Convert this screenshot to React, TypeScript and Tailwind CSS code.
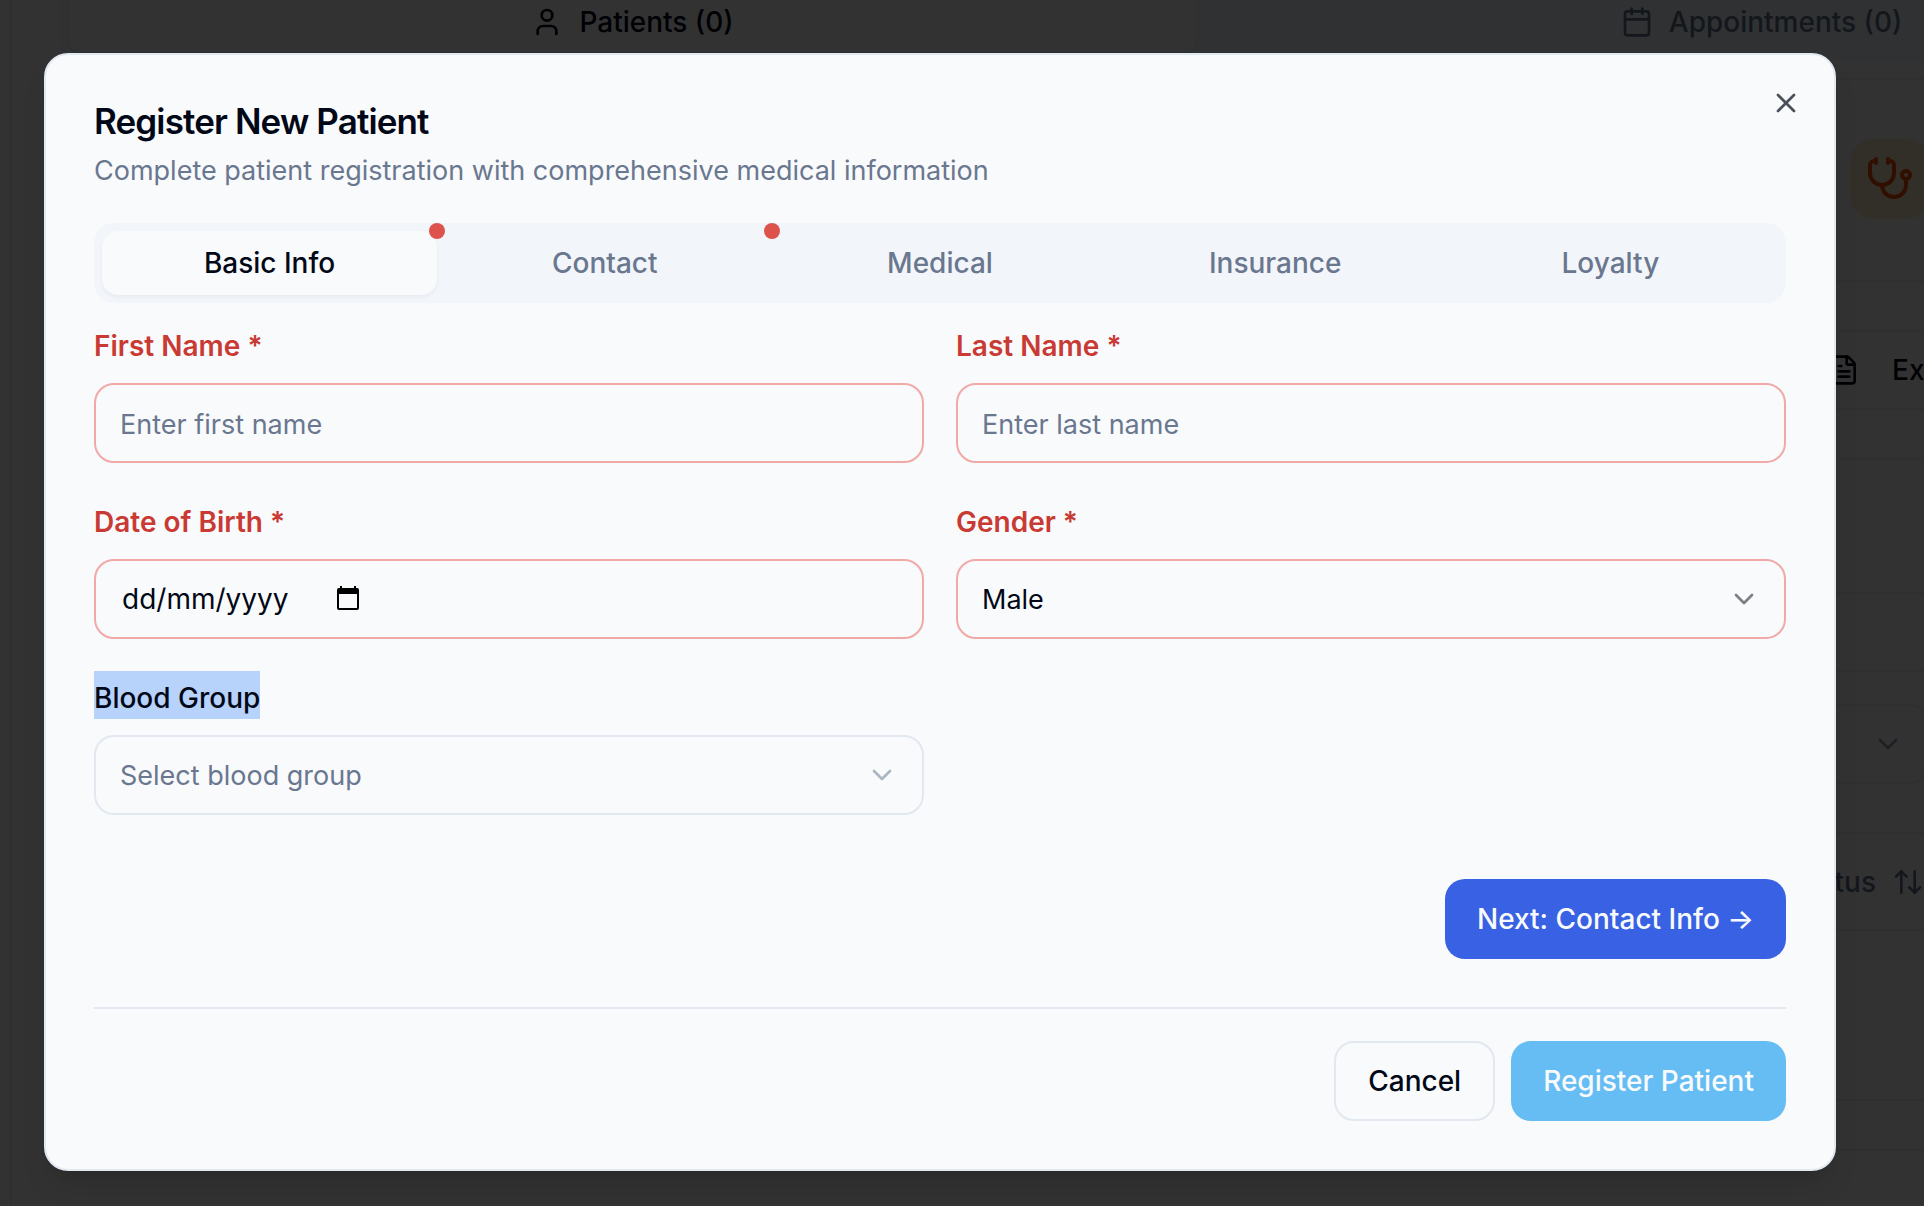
import { useState } from "react";
import type { ReactNode } from "react";
import { ArrowUpDown, Calendar, ChevronDown, FileText, Stethoscope, User, X } from "lucide-react";

const TABS = [
  { name: "Basic Info", missing: true },
  { name: "Contact", missing: true },
  { name: "Medical", missing: false },
  { name: "Insurance", missing: false },
  { name: "Loyalty", missing: false },
];

function Field({ id, label, required, children }: { id: string; label: string; required?: boolean; children: ReactNode }) {
  return (
    <div className="flex flex-col gap-4">
      <div className="flex h-12">
        {required ? (
          <label htmlFor={id} className="text-[28px] leading-[54px] font-semibold text-[#c93a34]">
            {label} *
          </label>
        ) : (
          <label htmlFor={id} className="bg-[#b7d3fb] text-[28px] leading-[54px] font-medium">
            {label}
          </label>
        )}
      </div>
      {children}
    </div>
  );
}

function Backdrop() {
  return (
    <div aria-hidden="true" className="absolute inset-0 overflow-hidden bg-[#f8fafc]">
      <div className="ml-[10px] flex h-full flex-col border-l-2 border-slate-200 pl-12">
        <div className="-mt-5 grid h-20 w-[122%] shrink-0 grid-cols-2 rounded-2xl bg-[#f1f5f9] p-2 text-[28px] font-medium">
          <div className="flex items-center justify-center gap-4 rounded-xl bg-[#f8fafc] pt-1 shadow-sm">
            <User size={32} />
            Patients (0)
          </div>
          <div className="flex items-center justify-center gap-4 pt-1 text-slate-500">
            <Calendar size={32} />
            Appointments (0)
          </div>
        </div>
        <div className="mt-[18px] flex h-[204px] shrink-0 justify-end border-y-2 border-slate-200">
          <div className="mt-[59px] -mr-1.5 flex size-20 items-center justify-center rounded-3xl bg-[#faebc8] text-orange-600">
            <Stethoscope size={48} />
          </div>
        </div>
        <div className="mt-12 flex h-20 shrink-0 items-center justify-end gap-8 border-y-2 border-slate-200 text-[28px] font-medium">
          <FileText size={32} />
          <span className="w-8">Ex</span>
        </div>
        <div className="mt-12 h-[136px] shrink-0 border-y-2 border-slate-200" />
        <div className="mt-[76px] flex h-[164px] shrink-0 items-center border-y-2 border-slate-200 pb-4">
          <div className="-mr-2 flex h-20 flex-1 items-center justify-end rounded-3xl border-2 border-slate-200 pr-[26px] text-slate-400">
            <ChevronDown size={32} />
          </div>
        </div>
        <div className="flex h-[97px] shrink-0 items-center justify-end gap-4 border-b-2 border-slate-200 text-[28px] font-medium text-slate-500">
          Status
          <ArrowUpDown size={32} />
        </div>
        <div className="h-[170px] shrink-0 border-b-2 border-slate-200" />
        <div className="h-[50px] shrink-0 border-b-2 border-slate-200" />
      </div>
    </div>
  );
}

export default function App() {
  const [tab, setTab] = useState("Basic Info");
  return (
    <div className="relative min-h-screen overflow-hidden font-['Inter','Liberation_Sans',sans-serif] text-[#020817]">
      <Backdrop />
      <div className="absolute inset-0 bg-black/80" />
      <div className="relative mr-11 flex justify-center px-2 pt-[53px] pb-8">
        <div
          role="dialog"
          aria-labelledby="dialog-title"
          className="relative flex w-full max-w-[1792px] flex-col rounded-3xl border-2 border-slate-200 bg-[#f9fafc] p-12 shadow-[0_20px_30px_-6px_rgb(0_0_0/0.1),0_8px_12px_-8px_rgb(0_0_0/0.1)]"
        >
          <button type="button" aria-label="Close" className="absolute top-8 right-8 opacity-70">
            <X size={32} />
          </button>
          <h2 id="dialog-title" className="text-[35px] leading-9 font-semibold tracking-tight">
            Register New Patient
          </h2>
          <p className="mt-3 text-[27px] leading-10 text-[#69778f]">
            Complete patient registration with comprehensive medical information
          </p>

          <div role="tablist" className="mt-8 grid h-20 grid-cols-5 rounded-[20px] bg-[#f2f5fa] p-2">
            {TABS.map((t) => (
              <button
                key={t.name}
                type="button"
                role="tab"
                aria-selected={tab === t.name}
                onClick={() => setTab(t.name)}
                className={
                  tab === t.name
                    ? "relative rounded-2xl bg-[#f9fafc] text-[28px] leading-10 font-medium shadow-[0_2px_4px_rgb(0_0_0/0.05)]"
                    : "relative rounded-2xl text-[28px] leading-10 font-medium text-[#69778f]"
                }
              >
                {t.name}
                {t.missing && <span className="absolute -top-2 -right-2 size-4 rounded-full bg-[#de524c]" />}
              </button>
            ))}
          </div>

          <form className="flex flex-col">
            <div className="mt-4 grid grid-cols-2 gap-8">
              <Field id="first" label="First Name" required>
                <input
                  id="first"
                  placeholder="Enter first name"
                  className="h-20 w-full rounded-[20px] border-2 border-[#f1a9a7] px-6 pt-0.5 text-[27px] placeholder:text-[#69778f]"
                />
              </Field>
              <Field id="last" label="Last Name" required>
                <input
                  id="last"
                  placeholder="Enter last name"
                  className="h-20 w-full rounded-[20px] border-2 border-[#f1a9a7] px-6 pt-0.5 text-[27px] placeholder:text-[#69778f]"
                />
              </Field>
              <Field id="dob" label="Date of Birth" required>
                <div className="flex h-20 items-center rounded-[20px] border-2 border-[#f1a9a7] px-6">
                  <input
                    id="dob"
                    placeholder="dd/mm/yyyy"
                    className="w-[216px] bg-transparent pl-0.5 text-[28px] outline-none placeholder:text-[#020817]"
                  />
                  <button type="button" aria-label="Open calendar">
                    <svg width="24" height="26" viewBox="0 0 24 26" fill="black">
                      <path d="M4 0h2v2h12V0h2v2h1a2 2 0 0 1 2 2v18a2 2 0 0 1-2 2H3a2 2 0 0 1-2-2V4a2 2 0 0 1 2-2h1zM3 8v14h18V8z" fillRule="evenodd" />
                    </svg>
                  </button>
                </div>
              </Field>
              <Field id="gender" label="Gender" required>
                <div className="relative">
                  <select
                    id="gender"
                    className="h-20 w-full appearance-none rounded-[20px] border-2 border-[#f1a9a7] px-6 pt-0.5 text-[27px]"
                  >
                    <option>Male</option>
                    <option>Female</option>
                    <option>Other</option>
                  </select>
                  <ChevronDown size={32} className="pointer-events-none absolute top-6 right-[26px] opacity-50" />
                </div>
              </Field>
              <Field id="blood" label="Blood Group">
                <div className="relative">
                  <select
                    id="blood"
                    className="h-20 w-full appearance-none rounded-[20px] border-2 border-slate-200 px-6 pt-0.5 text-[27px] text-[#69778f]"
                  >
                    <option>Select blood group</option>
                    <option>A+</option>
                    <option>B+</option>
                    <option>O+</option>
                  </select>
                  <ChevronDown
                    size={32}
                    className="pointer-events-none absolute top-6 right-[26px] text-slate-500 opacity-50"
                  />
                </div>
              </Field>
            </div>

            <button
              type="button"
              className="mt-16 h-20 self-end rounded-[20px] bg-[#3862e3] px-8 text-[28px] font-medium text-slate-50"
            >
              Next: Contact Info →
            </button>

            <div className="mt-12 flex justify-end gap-4 border-t-2 border-slate-200 pt-8">
              <button type="button" className="h-20 rounded-[20px] border-2 border-slate-200 px-8 text-[28px] font-medium">
                Cancel
              </button>
              <button type="button" className="h-20 rounded-[20px] bg-[#65bdf3] px-8 text-[28px] font-medium text-slate-50">
                Register Patient
              </button>
            </div>
          </form>
        </div>
      </div>
    </div>
  );
}
